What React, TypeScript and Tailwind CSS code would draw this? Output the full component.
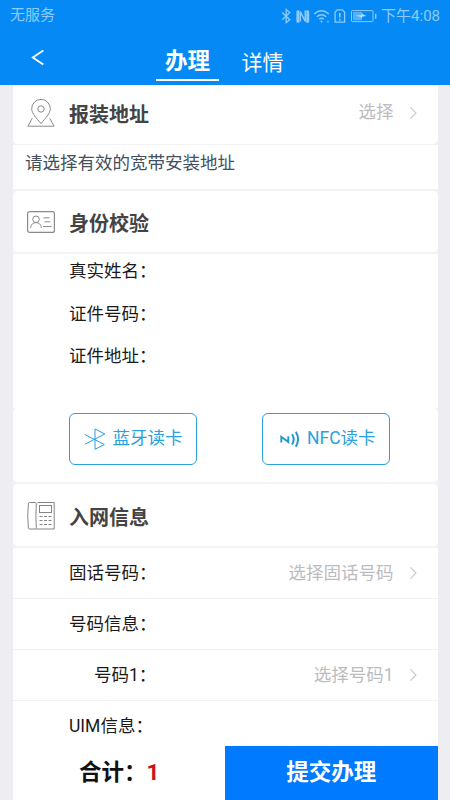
import type { ReactNode } from 'react';

const Chevron = () => (
  <svg className="ml-[15px] mr-[20px] shrink-0" width="9" height="14" viewBox="0 0 9 14" fill="none" stroke="#c8c8cc" strokeWidth="1.1">
    <path d="M1.5 1.4 7 7 1.5 12.600" />
  </svg>
);

const Colon = () => <span>：</span>;

function StatusIcons() {
  return (
    <svg width="98" height="16" viewBox="280 7 98 16" fill="none" stroke="#8dcbfb" strokeWidth="1.3">
      <path d="M282.2 11.5 289.8 18.7 286.2 21.6V8.6l3.6 2.9-7.6 7.2" />
      <path d="M299.300 9.200h-1.300q-1.600 0-1.600 1.600v9.400q0 1.600 1.600 1.600h1.300ZM306.300 21.800h1.300q1.600 0 1.600-1.600v-9.400q0-1.600-1.600-1.600h-1.300Z" fill="#8dcbfb" stroke="none" />
      <path d="M300.300 20.500V10.500l5 10V9.500" strokeWidth="1.500" />
      <path d="M314.200 13q7.300-6.500 14.600 0M316.800 15.800q4.700-4.200 9.400 0M319.200 18.300q2.300-2 4.600 0" strokeWidth="1.500" />
      <circle cx="321.500" cy="20.600" r="1" fill="#8dcbfb" stroke="none" />
      <circle cx="328" cy="20.600" r="1.200" fill="#8dcbfb" stroke="none" opacity=".6" />
      <path d="M337.300 8.800h5l2.300 2.300v10.100h-9.500V11z" />
      <path d="M339.800 12v4.500M339.800 17.700v1.800" strokeWidth="1.600" />
      <rect x="351.500" y="9.600" width="21.500" height="11" rx=".7" strokeWidth="1" />
      <rect x="353" y="11" width="9" height="8.200" fill="#8dcbfb" opacity=".6" stroke="none" />
      <path d="m356 14.600 5.500-.3 1-2 1.200 1.700 3.300 1-4.500.5-1.200 1.800-.8-1.500z" fill="#c5e5ff" stroke="none" />
      <path d="M375.700 12.800v5" strokeWidth="1.500" />
    </svg>
  );
}

function PinIcon() {
  return (
    <svg className="mb-[3px]" width="28" height="30" viewBox="0 0 28 30" fill="none" stroke="#8a8a8a" strokeWidth="1">
      <path d="M14 25.500C9.500 20.200 4.700 15.600 4.700 10.700a9.300 9.300 0 0 1 18.600 0C23.300 15.600 18.500 20.200 14 25.500Z" />
      <circle cx="14" cy="11" r="3.200" />
      <path d="M5.300 20.200.9 28.200h26.200l-4.400-8" />
    </svg>
  );
}

function IdIcon() {
  return (
    <svg width="28" height="22" viewBox="0 0 28 22" fill="none" stroke="#8a8a8a" strokeWidth="1">
      <rect x=".6" y=".6" width="26.800" height="20.800" rx="2" strokeWidth="1.200" />
      <circle cx="9" cy="8.300" r="3.300" />
      <path d="M3.600 16.800c.3-3.500 2.500-5.200 5.400-5.200s5.100 1.700 5.400 5.200M16.500 6.800h6M17.500 10.800h6M16 15.500h8.500" />
    </svg>
  );
}

function PhoneIcon() {
  return (
    <svg className="mt-[1px]" width="28" height="30" viewBox="0 0 28 30" fill="none" stroke="#858585" strokeWidth="1">
      <path d="M2.500 1.500h6q.8 0 .8 1.300-.8 12 0 24 0 1.200-.8 1.200h-6q-1 0-1.100-1.200Q0 14.800 1.400 2.800 1.500 1.500 2.500 1.500Z" />
      <path d="M10.500 1.500h16.700V28h-18" />
      <rect x="12.500" y="4.500" width="12" height="7" />
      <path d="M12.500 15.500h12M12.500 19.500h12M12.500 23.500h12" strokeWidth="1.200" strokeDasharray="3 1.500" />
    </svg>
  );
}

function BluetoothIcon() {
  return (
    <svg width="22" height="22" viewBox="0 0 22 22" fill="none" stroke="#2aa0dc" strokeWidth="1">
      <path d="M.8 6.500 20.300 16.500 11 21.300V.9l9.800 5.100L.8 16.300" />
    </svg>
  );
}

function NfcIcon() {
  return (
    <svg width="20" height="18" viewBox="0 0 20 18" fill="none" stroke="#2196cf" strokeWidth="2">
      <path d="M1.300 12.500V6.800l7 5.200V6.200" strokeWidth="1.900" />
      <path d="M12 4.200q3.400 5 0 10.300M15.800 1.700q4.500 7 0 15" />
    </svg>
  );
}

function SectionHead({ icon, title, className, titleClass = '', children }: { icon: ReactNode; title: string; className: string; titleClass?: string; children?: ReactNode }) {
  return (
    <div className={`flex items-center bg-white ${className}`}>
      <div className="ml-[14px] flex w-[28px] shrink-0 justify-center">{icon}</div>
      <h2 className={`ml-[14.500px] text-[20px] leading-[28px] font-bold text-[#444] ${titleClass}`}>{title}</h2>
      {children}
    </div>
  );
}

function Field({ label, value, indent, className = '' }: { label: string; value?: string; indent?: boolean; className?: string }) {
  return (
    <div className={`flex h-[51px] shrink-0 items-center border-b border-[#f3f3f5] bg-white text-[17.500px] ${className}`}>
      <span className={indent ? 'ml-[81.500px]' : 'ml-[56.500px]'}>
        {label}
        <Colon />
      </span>
      {value && (
        <div className="ml-auto flex items-center text-[#bcbcbf]">
          <span>{value}</span>
          <Chevron />
        </div>
      )}
    </div>
  );
}

export default function App() {
  return (
    <div className="flex h-[800px] w-[450px] flex-col overflow-hidden bg-[#eeeef2] font-[Roboto,'Noto_Sans_CJK_SC',sans-serif] text-[#1a1a1a]">
      <header className="h-[85px] shrink-0 bg-[#058af5] text-white">
        <div className="flex h-[31px] items-center pr-[10px] pl-[10px] text-[15px] text-[#8dcbfb]">
          <span>无服务</span>
          <div className="ml-auto flex items-center gap-[3px]">
            <StatusIcons />
            <span className="w-[59px] text-right leading-[22px] whitespace-nowrap">下午4:08</span>
          </div>
        </div>
        <div className="flex h-[54px] items-start">
          <svg className="mt-[18px] ml-[31px]" width="14" height="17" viewBox="0 0 14 17" fill="none" stroke="#fff" strokeWidth="1.800">
            <path d="M12.300 1.500 1.800 8.500l10.500 7" />
          </svg>
          <div className="ml-[111px] flex h-[50px] w-[63px] flex-col items-center border-b-2 border-white pt-[15px]">
            <span className="text-[22.500px] leading-[30px] font-bold">办理</span>
          </div>
          <span className="mt-[17px] ml-[22.500px] text-[21px] leading-[30px]">详情</span>
        </div>
      </header>

      <main className="mx-[12.500px] flex min-h-0 flex-1 flex-col overflow-hidden bg-[#f3f3f5]">
        <SectionHead icon={<PinIcon />} title="报装地址" className="h-[59px] shrink-0 rounded-b-[5px]" titleClass="mt-px">
          <div className="mb-[4px] ml-auto flex items-center text-[17.500px] text-[#bcbcbf]">
            <span>选择</span>
            <Chevron />
          </div>
        </SectionHead>
        <p className="mt-px h-[44px] shrink-0 bg-white pl-[12.500px] text-[17.500px] leading-[36px] text-[#44505c]">请选择有效的宽带安装地址</p>
        <SectionHead icon={<IdIcon />} title="身份校验" className="mt-[2px] h-[61px] shrink-0 rounded-[5px]" titleClass="mt-[4px]" />
        <div className="mt-[2px] h-[154px] shrink-0 bg-white pl-[56.500px] text-[17.500px] leading-[42.500px]">
          <div className="-mt-[4px]">真实姓名<Colon /></div>
          <div>证件号码<Colon /></div>
          <div>证件地址<Colon /></div>
        </div>
        <div className="flex h-[74px] shrink-0 justify-between rounded-[5px] bg-white pt-[5px] pr-[47.500px] pl-[56px] text-[17.500px] text-[#2aa0dc]">
          <button className="flex h-[52px] w-[128px] items-center gap-[7px] rounded-[6px] border border-[#2aa0dc] pl-[14px]">
            <BluetoothIcon />
            <span className="-mt-px">蓝牙读卡</span>
          </button>
          <button className="flex h-[52px] w-[128px] items-center gap-[7px] rounded-[6px] border border-[#2aa0dc] pl-[17px]">
            <NfcIcon />
            <span className="-mt-px">NFC读卡</span>
          </button>
        </div>
        <SectionHead icon={<PhoneIcon />} title="入网信息" className="mt-[2px] h-[62px] shrink-0 rounded-[5px]" titleClass="mt-[5px]" />
        <Field label="固话号码" value="选择固话号码" className="mt-[2px]" />
        <Field label="号码信息" />
        <Field label="号码1" value="选择号码1" indent />
        <Field label="UIM信息" />
      </main>

      <footer className="mx-[12.500px] flex h-[54px] shrink-0 bg-white text-[22.500px] font-bold">
        <div className="flex w-1/2 items-center pl-[66.500px] text-[#111]">
          合计<Colon />
          <span className="text-[#d0111b]">1</span>
        </div>
        <button className="w-1/2 bg-[#007aff] text-white">提交办理</button>
      </footer>
    </div>
  );
}
